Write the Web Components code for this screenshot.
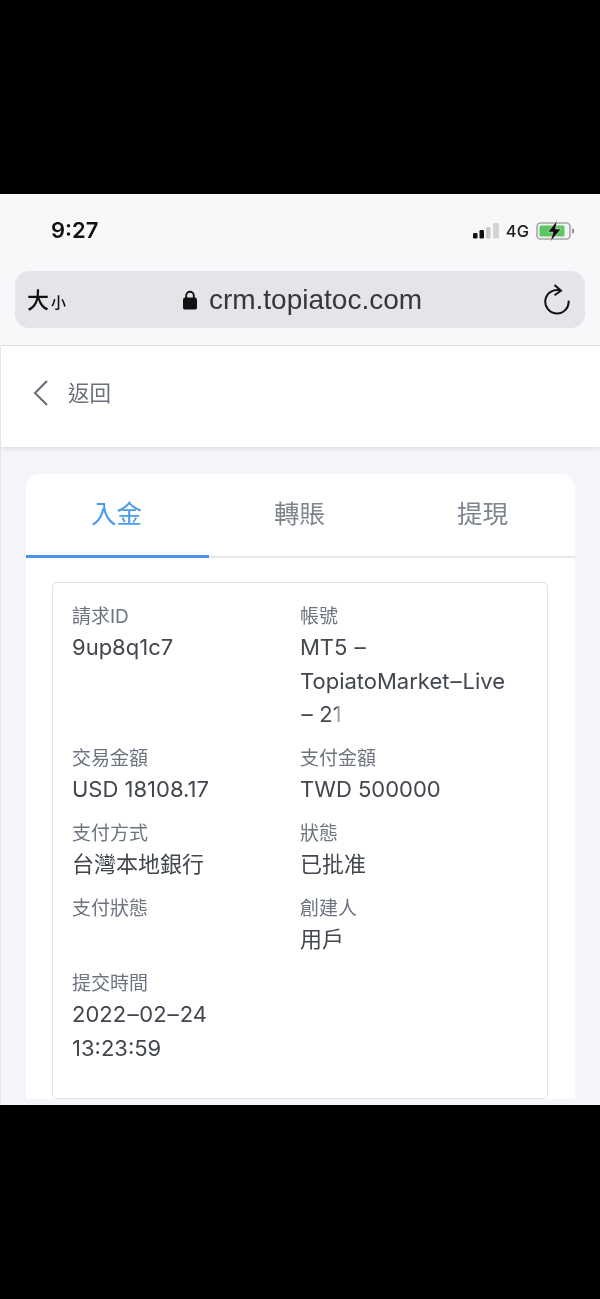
<!DOCTYPE html>
<html lang="zh-Hant">
<head>
<meta charset="utf-8">
<title>crm.topiatoc.com</title>
<style>
  html, body { margin: 0; height: 100%; background: #000; }
  body { font-family: Inter, "Noto Sans CJK TC", sans-serif; }
  /* 截图字体的连字符更长 */
  .dash { display: inline-block; margin: 0 1.5px; transform: scaleX(1.6); }
  .nowrap { white-space: nowrap; }
</style>
</head>
<body>
<phone-shot>
  <status-bar time="9:27"></status-bar>
  <url-bar host="crm.topiatoc.com"></url-bar>
  <back-header slot="page">返回</back-header>
  <card-panel slot="page">
    <tab-bar>
      <tab-item active>入金</tab-item>
      <tab-item>轉賬</tab-item>
      <tab-item>提現</tab-item>
    </tab-bar>
    <info-box>
      <info-field label="請求ID">9up8q1c7</info-field>
      <info-field label="帳號">MT5 <span class="dash">-</span> <span class="nowrap">TopiatoMarket<span class="dash">-</span>Live</span> <span class="dash">-</span> <fade-text>21</fade-text></info-field>
      <info-field label="交易金額">USD 18108.17</info-field>
      <info-field label="支付金額">TWD 500000</info-field>
      <info-field label="支付方式">台灣本地銀行</info-field>
      <info-field label="狀態">已批准</info-field>
      <info-field label="支付狀態"></info-field>
      <info-field label="創建人">用戶</info-field>
      <info-field label="提交時間"><span class="nowrap">2022<span class="dash">-</span>02<span class="dash">-</span>24</span> 13:23:59</info-field>
    </info-box>
  </card-panel>
</phone-shot>

<script>
// 小工具: 把 html 放进 open shadow root
function shadow(el, html) {
  el.attachShadow({ mode: 'open' }).innerHTML = html;
}

class PhoneShot extends HTMLElement {
  constructor() {
    super();
    shadow(this, `
      <style>
        :host { display: block; height: 1299px; background: #000; overflow: hidden; }
        .screen { margin-top: 194px; height: 911px; display: flex; flex-direction: column; overflow: hidden; background: #f8f8fa; filter: blur(.35px); }
        .top { flex: none; height: 151px; display: flex; flex-direction: column; }
        .page { flex: 1; min-height: 0; display: flex; flex-direction: column; background: #f3f5f8;
                border-top: 1px solid #dcdde1; border-left: 1px solid #e4e5e9; overflow: hidden; }
      </style>
      <div class="screen">
        <div class="top"><slot></slot></div>
        <div class="page"><slot name="page"></slot></div>
      </div>`);
  }
}

class StatusBar extends HTMLElement {
  constructor() {
    super();
    shadow(this, `
      <style>
        :host { display: flex; flex: none; height: 77px; align-items: center; justify-content: space-between;
                padding: 0 25px 5px 51px; box-sizing: border-box; color: #111; }
        .time { font: 600 22px Inter, sans-serif; }
        .right { display: flex; align-items: center; gap: 7px; padding-top: 1px; }
        .net { font: 500 16.5px Inter, sans-serif; color: #222; }
        svg { display: block; overflow: visible; }
      </style>
      <span class="time"></span>
      <span class="right">
        <svg width="26" height="16" viewBox="0 0 26 16">
          <rect x="0" y="10" width="4.5" height="5.5" rx="1.2" fill="#111"/>
          <rect x="6.5" y="7" width="4.5" height="8.5" rx="1.2" fill="#111"/>
          <rect x="13" y="4" width="4.5" height="11.5" rx="1.2" fill="#c9c9cc"/>
          <rect x="20" y="0" width="6" height="15.5" rx="1.2" fill="#d4d4d7"/>
        </svg>
        <span class="net">4G</span>
        <svg width="39" height="18" viewBox="0 0 39 18">
          <rect x="1" y="1" width="33" height="16" rx="3.5" fill="#f4f4f4" stroke="#a6a6a8" stroke-width="1.6"/>
          <rect x="3.5" y="3.5" width="25" height="11" rx="1.5" fill="#5dc75f"/>
          <rect x="36" y="6.5" width="2" height="5" rx="1" fill="#8d8d90"/>
          <path d="M21 -1.5 L12 10 H17 L14.5 19.5 L25 7 H19.5 Z" fill="#0c0c0c" stroke="#f8f8fa" stroke-width=".5"/>
        </svg>
      </span>`);
    this.shadowRoot.querySelector('.time').textContent = this.getAttribute('time');
  }
}

class UrlBar extends HTMLElement {
  constructor() {
    super();
    shadow(this, `
      <style>
        :host { display: grid; flex: none; grid-template-columns: 1fr auto 1fr; align-items: center; height: 57px;
                margin: 0 15px; padding: 0 13px 0 12px; box-sizing: border-box; background: #e4e5e8; border-radius: 14px; }
        .size { font: 500 22px/1 "Noto Sans CJK TC", sans-serif; color: #111; display: flex; align-items: baseline; padding-bottom: 3px; }
        .size small { font-size: 15px; margin-left: 2px; }
        .addr { display: flex; align-items: center; gap: 12px; margin-left: 6px; font: 400 28px "Liberation Sans", sans-serif; color: #36373b; }
        .reload { justify-self: end; display: block; margin-bottom: 2px; }
      </style>
      <span class="size">大<small>小</small></span>
      <span class="addr">
        <svg width="14" height="20" viewBox="0 0 14 20">
          <path d="M3.2 8.5V5.6a3.8 3.8 0 0 1 7.6 0v2.9" fill="none" stroke="#111" stroke-width="1.9"/>
          <rect x="0" y="7.6" width="14" height="12" rx="2.2" fill="#111"/>
        </svg>
        <span class="host"></span>
      </span>
      <svg class="reload" width="28" height="32" viewBox="0 0 28 32">
        <path d="M16.8 7.7 A11.7 11.7 0 1 0 24.6 17.7" fill="none" stroke="#111" stroke-width="2"/>
        <path d="M10.5 2 L17 7.7 L10.5 12.2" fill="none" stroke="#111" stroke-width="2"/>
      </svg>`);
    this.shadowRoot.querySelector('.host').textContent = this.getAttribute('host');
  }
}

class BackHeader extends HTMLElement {
  constructor() {
    super();
    shadow(this, `
      <style>
        :host { display: flex; flex: none; align-items: center; gap: 20px; height: 101px; padding: 0 0 7px 32px; box-sizing: border-box;
                background: #fff; box-shadow: 0 1px 4px rgba(70, 80, 100, .18); position: relative;
                font: 400 21.5px "Noto Sans CJK TC", sans-serif; color: #6b7079; }
        svg { display: block; }
        .txt { padding-bottom: 3px; }
      </style>
      <svg width="15" height="26" viewBox="0 0 15 26">
        <path d="M14 1 L2 13 L14 25" fill="none" stroke="#666c75" stroke-width="2"/>
      </svg>
      <span class="txt"><slot></slot></span>`);
  }
}

class CardPanel extends HTMLElement {
  constructor() {
    super();
    shadow(this, `
      <style>
        :host { display: block; flex: none; margin: 27px 25px 0 25px; background: #fff; border-radius: 14px 14px 0 0; }
      </style>
      <slot></slot>`);
  }
}

class TabBar extends HTMLElement {
  constructor() {
    super();
    shadow(this, `
      <style>
        :host { display: grid; grid-template-columns: repeat(3, 1fr); height: 84px; box-sizing: border-box; border-bottom: 2px solid #e6e8ec; }
      </style>
      <slot></slot>`);
  }
}

class TabItem extends HTMLElement {
  constructor() {
    super();
    shadow(this, `
      <style>
        :host { display: flex; align-items: center; justify-content: center; height: 82px; padding: 0 2px 8px 0; box-sizing: border-box;
                font: 400 25.5px "Noto Sans CJK TC", sans-serif; color: #7e858f; }
        :host([active]) { color: #4a9be8; box-shadow: inset 0 -3px 0 #4a93e6; height: 84px; margin-bottom: -2px; padding-bottom: 10px; }
      </style>
      <slot></slot>`);
  }
}

class InfoBox extends HTMLElement {
  constructor() {
    super();
    shadow(this, `
      <style>
        :host { display: grid; grid-template-columns: 228px 1fr; row-gap: 13.3px; align-content: start; height: 517px;
                margin: 24px 27px 0 26px; padding: 20px 18px 0 19px; box-sizing: border-box;
                border: 1.5px solid #e0e2e6; border-radius: 5px; }
      </style>
      <slot></slot>`);
  }
}

class InfoField extends HTMLElement {
  constructor() {
    super();
    shadow(this, `
      <style>
        :host { display: block; min-width: 0; padding-right: 18px; }
        .label { font: 400 19px/27px Inter, "Noto Sans CJK TC", sans-serif; color: #6d7480; }
        .value { font: 400 22px/33.7px Inter, "Noto Sans CJK TC", sans-serif; color: #42464e; min-height: 33.7px; padding-top: 1px; }
      </style>
      <div class="label"></div>
      <div class="value"><slot></slot></div>`);
    this.shadowRoot.querySelector('.label').textContent = this.getAttribute('label');
  }
}

// 截图里被抹掉一半的数字
class FadeText extends HTMLElement {
  constructor() {
    super();
    shadow(this, `
      <style>
        :host { display: inline-block; background: linear-gradient(90deg, #42464e 72%, #fff 100%);
                -webkit-background-clip: text; background-clip: text; color: transparent; }
      </style>
      <slot></slot>`);
  }
}

customElements.define('phone-shot', PhoneShot);
customElements.define('status-bar', StatusBar);
customElements.define('url-bar', UrlBar);
customElements.define('back-header', BackHeader);
customElements.define('card-panel', CardPanel);
customElements.define('tab-bar', TabBar);
customElements.define('tab-item', TabItem);
customElements.define('info-box', InfoBox);
customElements.define('info-field', InfoField);
customElements.define('fade-text', FadeText);
</script>
</body>
</html>
